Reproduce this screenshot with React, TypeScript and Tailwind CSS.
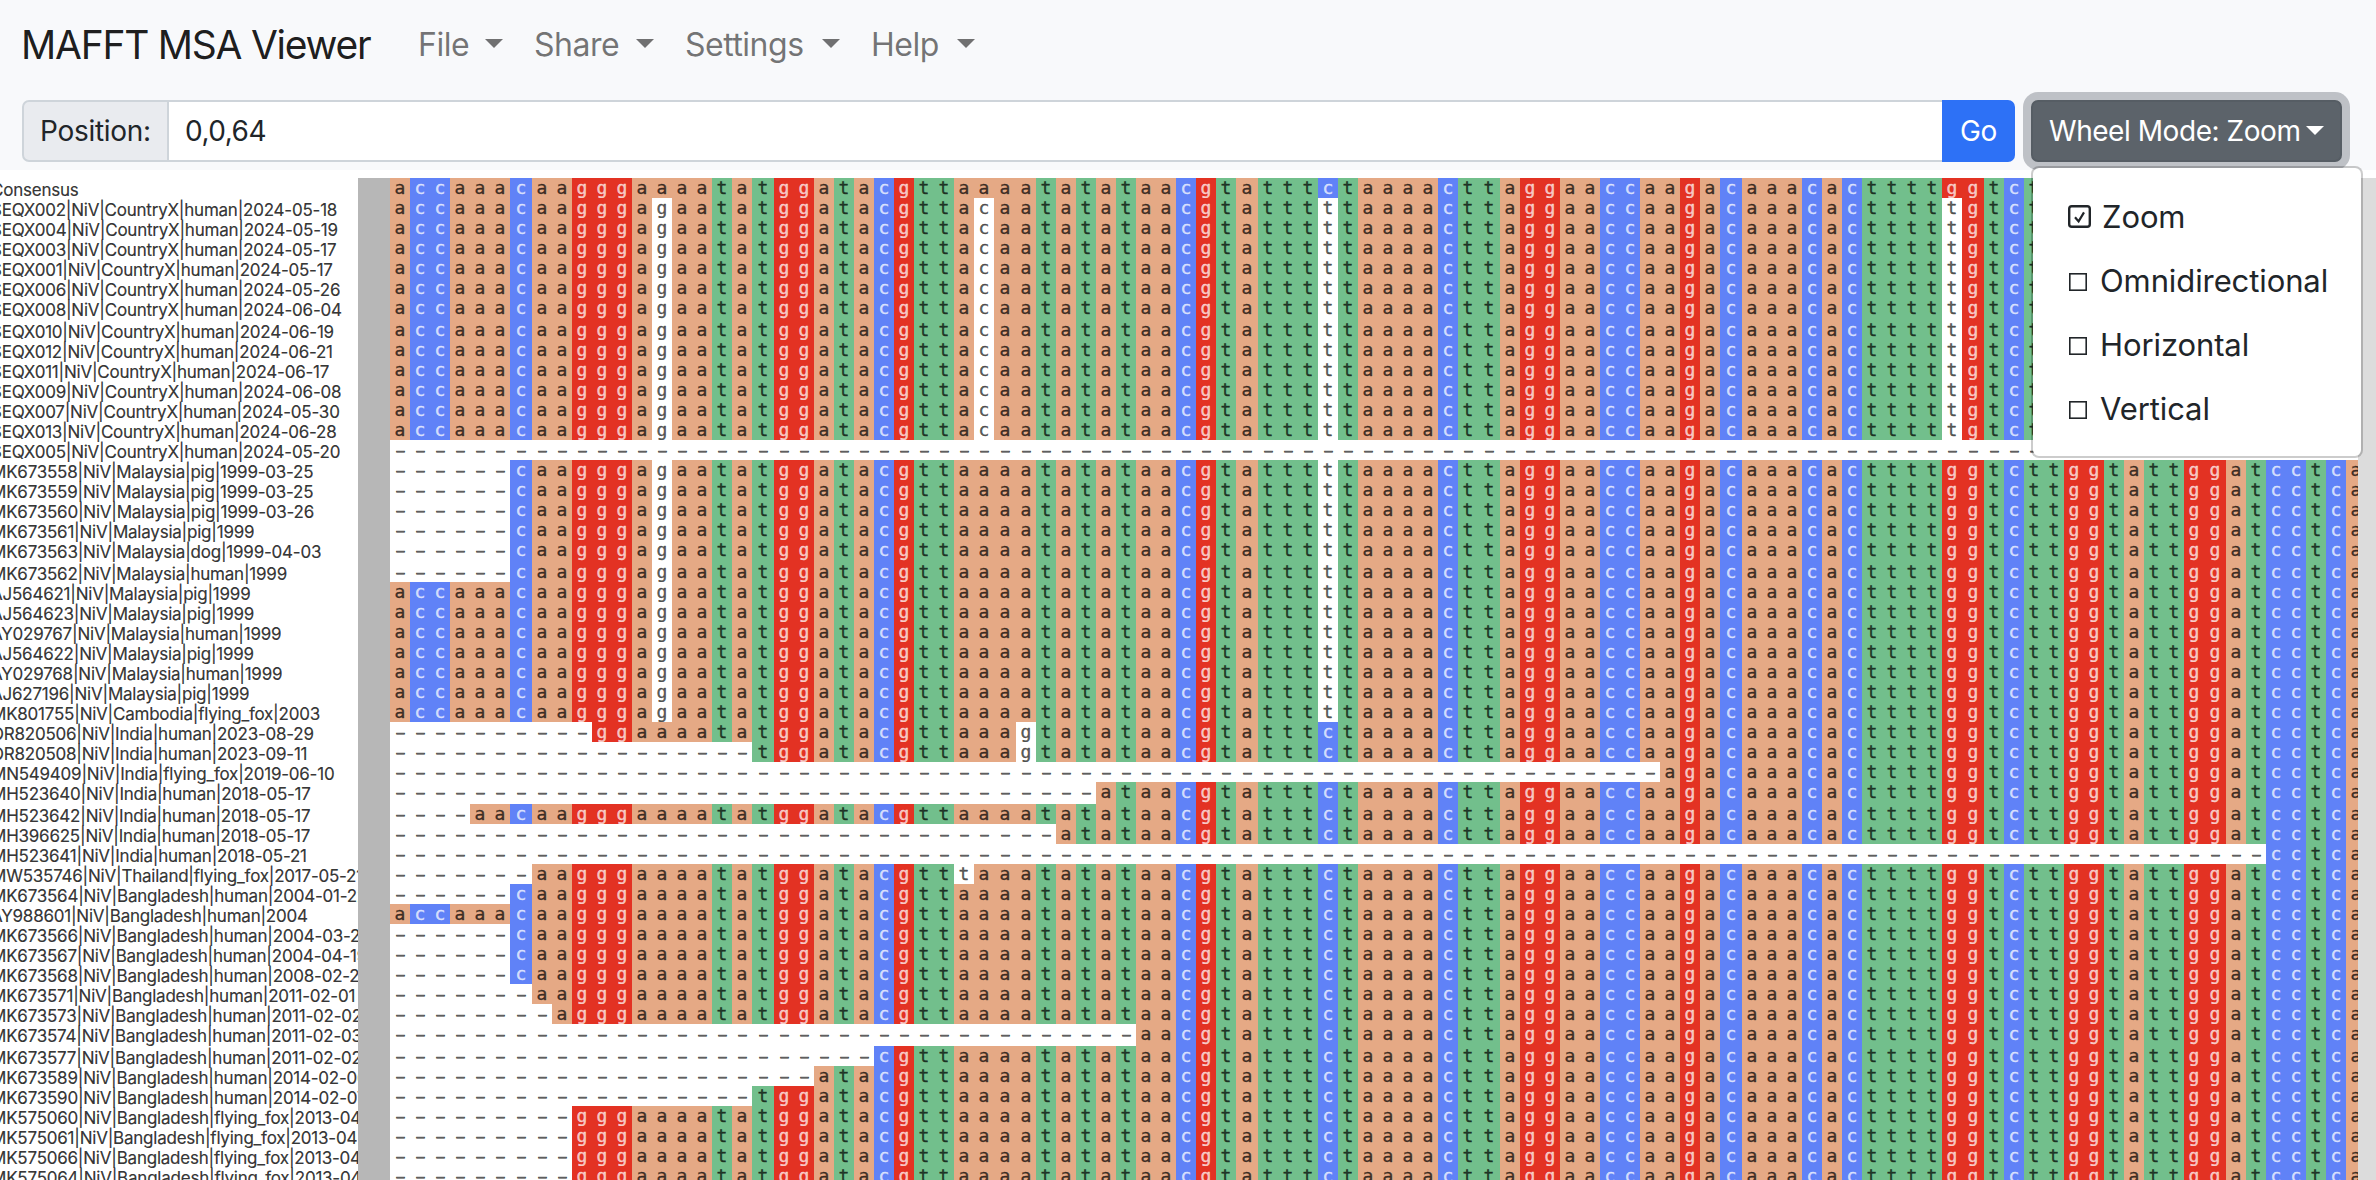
import React from 'react';

const CONSENSUS =
  'accaaacaagggaaaatatggatacgttaaaa' +
  'tatataacgtatttctaaaacttaggaaccaag' +
  'acaaacacttttggtcttggtattggatcctca';

const PITCH = 20.165;
const edge = (i: number) => Math.round((i * PITCH) / 2) * 2;

type Variants = Record<number, string>;
type Row = { name: string; start: number; variants: Variants };

const X: Variants = { 13: 'g', 29: 'c', 46: 't', 77: 't' };
const M: Variants = { 13: 'g', 46: 't' };
const I: Variants = { 31: 'g' };
const row = (name: string, start = 0, variants: Variants = {}): Row => ({ name, start, variants });

const ROWS: Row[] = [
  row('Consensus'),
  row('SEQX002|NiV|CountryX|human|2024-05-18', 0, X),
  row('SEQX004|NiV|CountryX|human|2024-05-19', 0, X),
  row('SEQX003|NiV|CountryX|human|2024-05-17', 0, X),
  row('SEQX001|NiV|CountryX|human|2024-05-17', 0, X),
  row('SEQX006|NiV|CountryX|human|2024-05-26', 0, X),
  row('SEQX008|NiV|CountryX|human|2024-06-04', 0, X),
  row('SEQX010|NiV|CountryX|human|2024-06-19', 0, X),
  row('SEQX012|NiV|CountryX|human|2024-06-21', 0, X),
  row('SEQX011|NiV|CountryX|human|2024-06-17', 0, X),
  row('SEQX009|NiV|CountryX|human|2024-06-08', 0, X),
  row('SEQX007|NiV|CountryX|human|2024-05-30', 0, X),
  row('SEQX013|NiV|CountryX|human|2024-06-28', 0, X),
  row('SEQX005|NiV|CountryX|human|2024-05-20', 98),
  row('MK673558|NiV|Malaysia|pig|1999-03-25', 6, M),
  row('MK673559|NiV|Malaysia|pig|1999-03-25', 6, M),
  row('MK673560|NiV|Malaysia|pig|1999-03-26', 6, M),
  row('MK673561|NiV|Malaysia|pig|1999', 6, M),
  row('MK673563|NiV|Malaysia|dog|1999-04-03', 6, M),
  row('MK673562|NiV|Malaysia|human|1999', 6, M),
  row('AJ564621|NiV|Malaysia|pig|1999', 0, M),
  row('AJ564623|NiV|Malaysia|pig|1999', 0, M),
  row('AY029767|NiV|Malaysia|human|1999', 0, M),
  row('AJ564622|NiV|Malaysia|pig|1999', 0, M),
  row('AY029768|NiV|Malaysia|human|1999', 0, M),
  row('AJ627196|NiV|Malaysia|pig|1999', 0, M),
  row('MK801755|NiV|Cambodia|flying_fox|2003', 0, M),
  row('OR820506|NiV|India|human|2023-08-29', 10, I),
  row('OR820508|NiV|India|human|2023-09-11', 18, I),
  row('MN549409|NiV|India|flying_fox|2019-06-10', 63),
  row('MH523640|NiV|India|human|2018-05-17', 35),
  row('MH523642|NiV|India|human|2018-05-17', 4),
  row('MH396625|NiV|India|human|2018-05-17', 33),
  row('MH523641|NiV|India|human|2018-05-21', 93),
  row('MW535746|NiV|Thailand|flying_fox|2017-05-21', 7, { 28: 't' }),
  row('MK673564|NiV|Bangladesh|human|2004-01-22', 6),
  row('AY988601|NiV|Bangladesh|human|2004', 0),
  row('MK673566|NiV|Bangladesh|human|2004-03-23', 6),
  row('MK673567|NiV|Bangladesh|human|2004-04-19', 6),
  row('MK673568|NiV|Bangladesh|human|2008-02-20', 6),
  row('MK673571|NiV|Bangladesh|human|2011-02-01', 7),
  row('MK673573|NiV|Bangladesh|human|2011-02-02', 8),
  row('MK673574|NiV|Bangladesh|human|2011-02-03', 37),
  row('MK673577|NiV|Bangladesh|human|2011-02-02', 24),
  row('MK673589|NiV|Bangladesh|human|2014-02-06', 21),
  row('MK673590|NiV|Bangladesh|human|2014-02-07', 18),
  row('MK575060|NiV|Bangladesh|flying_fox|2013-04', 9),
  row('MK575061|NiV|Bangladesh|flying_fox|2013-04', 9),
  row('MK575066|NiV|Bangladesh|flying_fox|2013-04', 9),
  row('MK575064|NiV|Bangladesh|flying_fox|2013-04', 9),
];

const BASE: Record<string, string> = {
  a: 'bg-[#e5a985] text-black/70',
  c: 'bg-[#6082f7] text-white/70',
  g: 'bg-[#e33223] text-white/70',
  t: 'bg-[#72bf8c] text-black/70',
};

function Sequence({ r, index }: { r: Row; index: number }) {
  return (
    <div className="flex shrink-0" style={{ height: edge(index + 1) - edge(index) }}>
      {CONSENSUS.split('').map((base, i) => {
        const gap = i < r.start;
        const variant = r.variants[i];
        const tone = gap || variant ? 'bg-white text-black/65' : BASE[base];
        return (
          <span
            key={i}
            className={`flex shrink-0 justify-center leading-[20px] [-webkit-text-stroke:0.4px] ${tone}`}
            style={{ width: edge(i + 1) - edge(i) }}
          >
            {gap ? <span className="inline-block h-[20px] scale-x-[1.8]">-</span> : variant || base}
          </span>
        );
      })}
    </div>
  );
}

function Caret({ className = '' }: { className?: string }) {
  return (
    <span
      className={`inline-block border-x-[9px] border-t-[9px] border-x-transparent border-t-current ${className}`}
    />
  );
}

function NavItem({ label, width }: { label: string; width: string }) {
  return (
    <div className={`flex shrink-0 items-center justify-between ${width}`}>
      <span>{label}</span>
      <Caret className="mb-[3px]" />
    </div>
  );
}

function CheckBox({ checked }: { checked: boolean }) {
  if (!checked) {
    return (
      <svg width="32" height="24" viewBox="0 0 32 24" fill="none" stroke="#212529" strokeWidth="1.6">
        <rect x="1.8" y="4.8" width="16.4" height="16.4" />
      </svg>
    );
  }
  return (
    <svg width="34" height="24" viewBox="0 0 34 24" fill="none" stroke="#212529" strokeWidth="2.4">
      <rect x="1.2" y="1.2" width="20.6" height="20.6" rx="2.6" />
      <path d="M7 12.2l3.6 4.2L16 7.4" strokeWidth="2.2" />
    </svg>
  );
}

export default function App() {
  return (
    <div className="flex h-[1180px] w-[2376px] flex-col overflow-hidden bg-white font-['Inter',sans-serif] text-[#212529]">
      <header className="h-[170px] shrink-0 bg-[#f8f9fb]">
        <nav className="flex h-[90px] items-center pl-[21px] text-[32px] tracking-[-0.5px] text-black/55">
          <div className="w-[397px] shrink-0 whitespace-nowrap text-[39px] tracking-[-1.25px] text-black/90">
            MAFFT MSA Viewer
          </div>
          <div className="flex gap-[31px]">
            <NavItem label="File" width="w-[85px]" />
            <NavItem label="Share" width="w-[120px]" />
            <NavItem label="Settings" width="w-[155px]" />
            <NavItem label="Help" width="w-[104px]" />
          </div>
        </nav>
        <div className="mt-[10px] flex h-[62px] pl-[22px] text-[28px]">
          <div className="flex h-full w-[1993px]">
            <div className="flex w-[147px] items-center rounded-l-[7px] border-2 border-[#ced4da] bg-[#e9ebef] pl-[16px] tracking-[-0.3px]">
              Position:
            </div>
            <div className="flex flex-1 items-center border-y-2 border-[#ced4da] bg-white pl-[16px] tracking-[-0.5px]">
              0,0,64
            </div>
            <div className="flex w-[73px] items-center justify-center rounded-r-[7px] bg-[#2d71f6] tracking-[-0.3px] text-white">
              Go
            </div>
          </div>
          <div className="relative ml-[16px] h-full w-[311px]">
            <button className="flex h-full w-full items-center justify-between whitespace-nowrap rounded-[7px] border-2 border-[#565d64] bg-[#5c636a] pl-[16px] pr-[16px] tracking-[-0.45px] text-white shadow-[0_0_0_8px_#bec1c6]">
              Wheel Mode: Zoom
              <Caret className="mb-[2px] border-x-[8px] border-t-[8px]" />
            </button>
            <div className="absolute left-0 top-[66px] z-10 flex h-[292px] w-[332px] flex-col rounded-[8px] border-2 border-black/20 bg-white bg-clip-padding pl-[35px] pt-[17px] text-[31px]">
              {['Zoom', 'Omnidirectional', 'Horizontal', 'Vertical'].map((label, i) => (
                <div key={label} className="flex h-[64px] shrink-0 items-center">
                  <CheckBox checked={i === 0} />
                  <span className="tracking-[-0.1px]">{label}</span>
                </div>
              ))}
            </div>
          </div>
        </div>
      </header>
      <main className="mt-[8px] flex min-h-0 flex-1">
        <div className="w-[358px] shrink-0 overflow-hidden bg-white text-[17px] tracking-[-0.23px] text-black/80 [-webkit-text-stroke:0.2px]">
          {ROWS.map((r, i) => (
            <div
              key={r.name}
              className="ml-[-9px] whitespace-nowrap leading-[24px]"
              style={{ height: edge(i + 1) - edge(i) }}
            >
              {r.name}
            </div>
          ))}
        </div>
        <div className="w-[32px] shrink-0 bg-[#b7b7b7]" />
        <div className="w-[1968px] shrink-0 overflow-hidden font-['DejaVu_Sans_Mono',monospace] text-[18px]">
          {ROWS.map((r, i) => (
            <Sequence key={r.name} r={r} index={i} />
          ))}
        </div>
        <div className="flex-1 bg-[#dcdcdc]" />
      </main>
    </div>
  );
}
